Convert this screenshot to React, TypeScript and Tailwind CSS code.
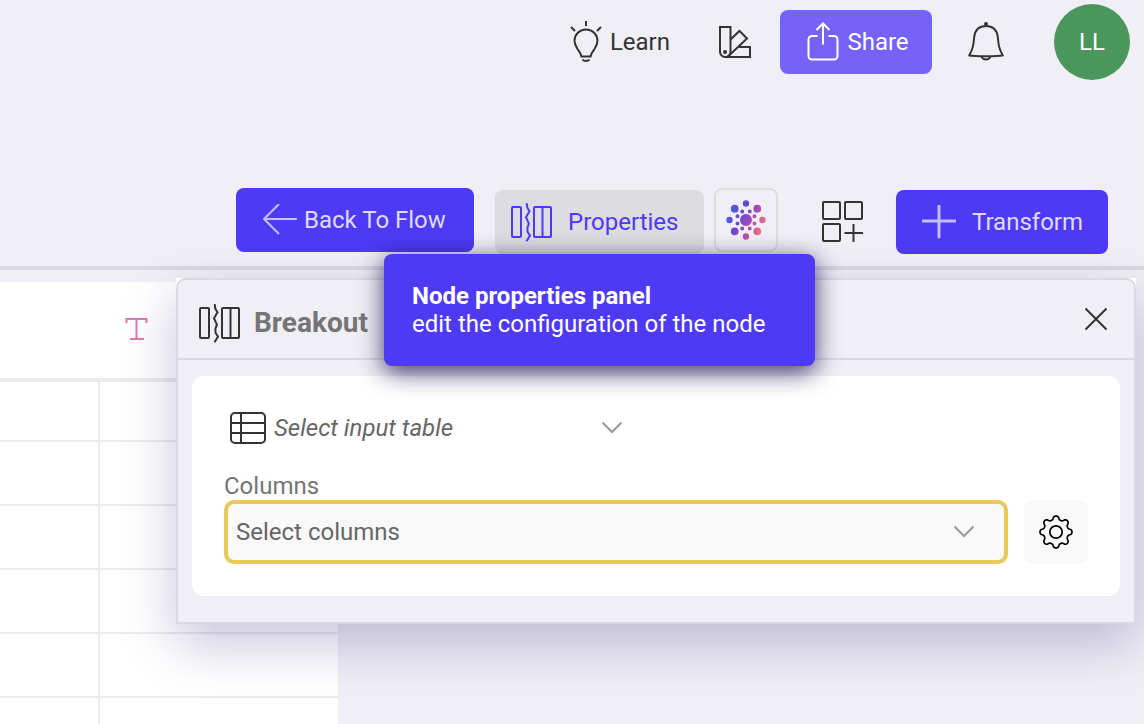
import type { ReactNode } from "react";

function Svg({ w, h, sw = 2, className = "", children }: { w: number; h: number; sw?: number; className?: string; children: ReactNode }) {
  return (
    <svg
      width={w}
      height={h}
      viewBox={`0 0 ${w} ${h}`}
      fill="none"
      stroke="currentColor"
      strokeWidth={sw}
      className={`shrink-0 ${className}`}
      aria-hidden="true"
    >
      {children}
    </svg>
  );
}

function BulbIcon() {
  return (
    <Svg w={32} h={44}>
      <path d="M16 1v5M1 7l4 4M31 7l-4 4" />
      <path d="M16 9.500c-6.500 0-11.500 5-11.500 11.300 0 3.400 1.300 5.600 3 8.200 1.800 2.600 3.500 4.600 4 7.500h9c.5-2.900 2.200-4.900 4-7.500 1.700-2.600 3-4.800 3-8.200 0-6.300-5-11.300-11.500-11.300z" />
      <path d="M12.500 39.500c1.500 2 5.500 2 7 0" />
    </Svg>
  );
}

function SwatchIcon() {
  return (
    <Svg w={34} h={34}>
      <path d="M2 2h10.500v24.500a5 5 0 0 1-5.300 5.500A5.300 5.300 0 0 1 2 26.500z" />
      <path d="M12.500 14.500 21.500 6l7.500 7.500-19 18" />
      <path d="M21 22h11v10H7" />
      <circle cx="7" cy="27" r="1" />
    </Svg>
  );
}

function ShareIcon() {
  return (
    <Svg w={32} h={40}>
      <path d="M10.500 14H5a3.500 3.500 0 0 0-3.500 3.500V34A3.500 3.500 0 0 0 5 37.500h22a3.500 3.500 0 0 0 3.500-3.500V17.500A3.500 3.500 0 0 0 27 14h-5.500M16 22.500V2M9.500 8 16 1.500 22.500 8" />
    </Svg>
  );
}

function BellIcon() {
  return (
    <Svg w={38} h={42}>
      <circle cx="19" cy="3" r="2" fill="currentColor" stroke="none" />
      <path d="M19 2v3M19 5C12 5 8 9.200 7.200 16c-.7 7.500-1 11.500-5 18.500 5 1 28.600 1 33.600 0-4-7-4.300-11-5-18.500C30 9.200 26 5 19 5z" strokeLinejoin="round" />
      <path d="M14.500 35.500c1.500 4 7.500 4 9 0" />
    </Svg>
  );
}

function BreakoutIcon() {
  return (
    <Svg w={42} h={40}>
      <rect x="2" y="5" width="9" height="30" rx="1" />
      <path d="m16.700 1.200.6 4.500 2.200 3.600-3.500 5.900 2.900 6.500-1.500 4 .2 4.300 2.400 3.500-3.500 5.700" />
      <rect x="24" y="5" width="17" height="30" rx="1" />
      <path d="M32.500 5v30" />
    </Svg>
  );
}

const dots: [number, number, number][] = [
  [20, 20, 6], [20, 3.5, 3.200], [20, 36.500, 3.200], [3.500, 20, 3.200], [36.500, 20, 3.200],
  [8.700, 8.700, 3.900], [31.300, 8.700, 3.900], [8.700, 31.300, 3.900], [31.300, 31.300, 3.900],
  [16.200, 11.500, 2], [23.800, 11.500, 2], [16.200, 28.500, 2], [23.800, 28.500, 2],
  [11.500, 16.200, 2], [28.500, 16.200, 2], [11.500, 23.600, 2], [28.500, 23.600, 2],
];

function SparkDots() {
  return (
    <svg width="40" height="40" viewBox="0 0 40 40" aria-hidden="true">
      <defs>
        <linearGradient id="spark" gradientUnits="userSpaceOnUse" x1="6" y1="12" x2="36" y2="28">
          <stop offset="0" stopColor="#5257dc" />
          <stop offset="0.3" stopColor="#6a48cf" />
          <stop offset="0.6" stopColor="#a649b8" />
          <stop offset="1" stopColor="#ee6f8c" />
        </linearGradient>
      </defs>
      <g fill="url(#spark)">
        <path
          d={dots
            .map(([x, y, r]) => `M${x - r} ${y}a${r} ${r} 0 1 0 ${2 * r} 0a${r} ${r} 0 1 0 ${-2 * r} 0z`)
            .join("")}
        />
      </g>
    </svg>
  );
}

function AddTileIcon() {
  return (
    <Svg w={42} h={42}>
      <rect x="1" y="2" width="17" height="17" rx="1" />
      <rect x="23" y="2" width="17" height="17" rx="1" />
      <rect x="1" y="24" width="17" height="17" rx="1" />
      <path d="M31.500 24v18M22.500 33H41" />
    </Svg>
  );
}

function Chevron() {
  return (
    <Svg w={22} h={14} className="pointer-events-none -ml-10 text-[#999]">
      <path d="M1.500 1.500 11 11l9.500-9.500" />
    </Svg>
  );
}

function GearIcon() {
  const points = Array.from({ length: 144 }, (_, i) => {
    const a = (i / 144) * Math.PI * 2;
    const r = 14.2 + 1.9 * Math.tanh(1.6 * Math.cos(8 * a));
    return `${(18 + r * Math.sin(a)).toFixed(2)} ${(18 - r * Math.cos(a)).toFixed(2)}`;
  });
  return (
    <Svg w={36} h={36} sw={1.7}>
      <path d={`M${points.join("L")}Z`} strokeLinejoin="round" />
      <circle cx="18" cy="18" r="6.200" />
    </Svg>
  );
}

const rows = ["h-[60px]", "h-16", "h-16", "h-16", "h-16", "h-16"];

export default function App() {
  return (
    <div className="relative flex h-screen flex-col overflow-hidden bg-[#f0eff5] font-['Roboto','Liberation_Sans',sans-serif] text-2xl text-[#333]">
      <header className="flex h-[84px] shrink-0 items-center justify-end pr-3.5">
        <button type="button" className="flex items-center gap-2">
          <BulbIcon />
          Learn
        </button>
        <button type="button" aria-label="Theme" className="ml-12">
          <SwatchIcon />
        </button>
        <button type="button" className="ml-7 flex h-16 w-[152px] items-center justify-center gap-2 rounded-lg bg-[#7662f8] pl-1 text-white">
          <ShareIcon />
          Share
        </button>
        <button type="button" aria-label="Notifications" className="ml-[35px]">
          <BellIcon />
        </button>
        <button type="button" aria-label="Account" className="ml-[49px] flex size-19 items-center justify-center rounded-full bg-[#4a965d] text-white">
          LL
        </button>
      </header>

      <nav className="mt-[104px] flex h-[78px] shrink-0 items-start justify-end pr-9">
        <button type="button" className="flex h-16 w-[238px] items-center gap-1.5 rounded-lg bg-[#4e3af5] pl-[26px] text-[#dfdbfd]">
          <Svg w={36} h={32} className="text-[#c5befc]">
            <path d="M35 15H2M17 0 2 15l15 15" />
          </Svg>
          Back To Flow
        </button>
        <div className="relative ml-[21px] mt-0.5">
          <button type="button" aria-describedby="properties-tip" className="flex h-16 w-[209px] items-center gap-4 rounded-lg bg-[#dddce1] pl-[15px] text-[#4e3af5]">
            <BreakoutIcon />
            Properties
          </button>
          <div
            id="properties-tip"
            role="tooltip"
            className="absolute -left-[111px] top-16 z-20 h-28 w-[431px] rounded-lg bg-[#4e3af5] px-7 py-7 leading-7 text-white shadow-[0_6px_24px_rgba(16,6,70,0.8)]"
          >
            <strong className="block font-bold">Node properties panel</strong>
            edit the configuration of the node
          </div>
        </div>
        <button type="button" aria-label="Assistant" className="ml-2.5 flex size-16 items-center justify-center rounded-lg border-2 border-[#dddce1]">
          <SparkDots />
        </button>
        <button type="button" aria-label="Add tile" className="ml-11 mt-3">
          <AddTileIcon />
        </button>
        <button type="button" className="ml-8 mt-0.5 flex h-16 w-[212px] items-center gap-4 rounded-lg bg-[#4e3af5] pl-[26px] text-[#dfdbfd]">
          <Svg w={34} h={34} sw={3} className="text-[#c5befc]">
            <path d="M17 1v31M1 16h32" strokeLinecap="round" />
          </Svg>
          Transform
        </button>
      </nav>

      <main className="relative min-h-0 flex-1 border-t-4 border-[#d9d9df]">
        <table className="mt-3 w-[338px] table-fixed border-separate border-spacing-0 bg-white">
          <thead>
            <tr className="h-[100px]">
              <th className="w-[100px] border-b-4 border-[#ebebeb]" aria-label="Value" />
              <th className="border-b-4 border-[#ebebeb] pb-0.5 pl-[25px]" aria-label="Text column">
                <Svg w={24} h={24} className="text-[#dc78b2]">
                  <path d="M1.500 6V2h20v4M11.500 2v20M5 22h14" />
                </Svg>
              </th>
            </tr>
          </thead>
          <tbody>
            {rows.map((height, i) => (
              <tr key={i} className={height}>
                <td className="border-b-2 border-r-2 border-[#ebebeb]" />
                <td className="border-b-2 border-[#ebebeb]" />
              </tr>
            ))}
          </tbody>
        </table>

        <section
          aria-label="Breakout"
          className="absolute left-44 right-2 top-2 z-10 bg-white shadow-[0_20px_50px_rgba(70,60,135,0.3)]"
        >
          <div className="rounded-t-[10px] border-2 border-[#d9d9df] bg-[#f0eff5]">
            <div className="flex h-20 items-center gap-3.5 border-b-2 border-[#d9d9df] pl-5 pr-[26px] pt-2">
              <BreakoutIcon />
              <h2 className="flex-1 text-[28px] font-bold leading-8 text-[#757575]">Breakout</h2>
              <button type="button" aria-label="Close" className="mb-2">
                <Svg w={24} h={24}>
                  <path d="m1.500 1.500 21 21M22.500 1.500l-21 21" />
                </Svg>
              </button>
            </div>
            <div className="px-3.5 pb-[26px] pt-4">
              <form className="rounded-xl bg-white px-8 py-8">
                <div className="flex h-10 items-center pl-1.5">
                  <Svg w={36} h={32}>
                    <rect x="1" y="1" width="34" height="30" rx="4" />
                    <path d="M11 1v30M1 11h34M1 21h34" />
                  </Svg>
                  <select aria-label="Input table" className="ml-2 h-10 w-[367px] appearance-none bg-transparent pr-12 italic text-[#666]">
                    <option>Select input table</option>
                  </select>
                  <Chevron />
                </div>
                <label htmlFor="columns" className="mt-[22px] block h-[30px] leading-8 text-[#757575]">
                  Columns
                </label>
                <div className="flex gap-4">
                  <div className="flex h-16 flex-1 items-center rounded-[10px] border-4 border-[#e9c95c] bg-[#f9f9f9] pr-[29px]">
                    <select id="columns" className="h-full flex-1 appearance-none bg-transparent pl-2 text-[#666]">
                      <option>Select columns</option>
                    </select>
                    <Chevron />
                  </div>
                  <button type="button" aria-label="Column settings" className="flex size-16 items-center justify-center rounded-lg bg-[#f9f9f9] text-black">
                    <GearIcon />
                  </button>
                </div>
              </form>
            </div>
          </div>
        </section>
      </main>
    </div>
  );
}
